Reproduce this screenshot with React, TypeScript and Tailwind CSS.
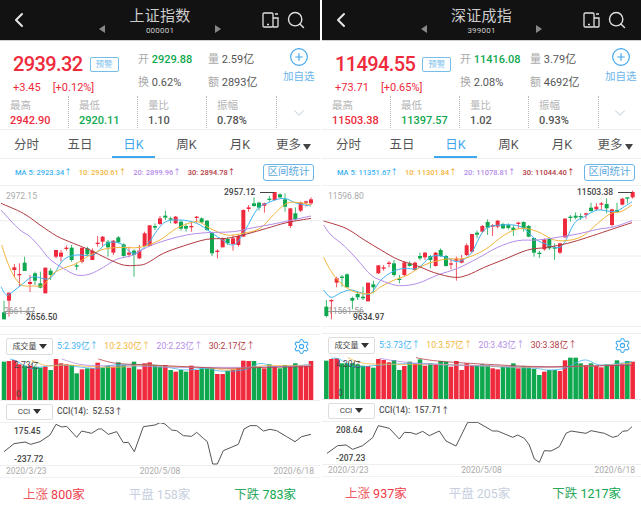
import { ChevronDown, ChevronLeft, CirclePlus, Search, Settings } from 'lucide-react'

const RED = '#ee2a3c'
const GREEN = '#10a84f'
const MA = ['#3fb2f2', '#f2b53a', '#b48ce8', '#b23a42']

type Candle = [number, number, number, number, number, 'r' | 'g']
type Pt = number[]

// smooth a list of points into a path
function smooth(p: Pt[]) {
  let d = `M${p[0][0]} ${p[0][1]}`
  for (let i = 0; i < p.length - 1; i++) {
    const a = p[Math.max(i - 1, 0)]
    const b = p[i]
    const c = p[i + 1]
    const e = p[Math.min(i + 2, p.length - 1)]
    d += `C${b[0] + (c[0] - a[0]) / 6} ${b[1] + (c[1] - a[1]) / 6} ${c[0] - (e[0] - b[0]) / 6} ${c[1] - (e[1] - b[1]) / 6} ${c[0]} ${c[1]}`
  }
  return d
}

const leftCandles: Candle[] = [
  [12,457,478,422,478,'g'],[27,398,422,398,470,'r'],[43,322,330,312,352,'r'],[58,342,346,310,380,'r'],[74,308,333,290,333,'g'],
  [90,366,372,345,396,'r'],[105,340,362,335,375,'g'],[121,370,383,335,385,'g'],[136,323,400,323,400,'r'],[152,332,345,325,360,'g'],
  [168,270,290,270,295,'r'],[183,278,290,270,305,'r'],[199,263,267,256,272,'r'],[215,263,300,255,305,'g'],[230,316,320,308,330,'g'],
  [246,263,305,263,310,'r'],[262,265,283,260,285,'g'],[277,272,300,265,300,'r'],[293,248,252,228,260,'r'],[308,230,245,228,258,'r'],
  [324,245,262,240,290,'g'],[340,242,278,240,285,'r'],[355,232,247,228,250,'g'],[371,253,288,250,290,'g'],[387,278,284,260,292,'r'],
  [402,272,285,268,350,'g'],[418,272,295,255,297,'r'],[434,220,258,215,258,'r'],[449,196,258,196,258,'r'],[465,198,203,190,210,'g'],
  [480,175,192,168,195,'r'],[496,167,173,152,180,'g'],[512,175,177,170,190,'g'],[527,170,190,168,192,'r'],[543,185,206,180,212,'g'],
  [558,198,206,190,215,'g'],[574,198,202,185,215,'r'],[590,170,173,168,188,'r'],[605,175,187,172,190,'g'],[621,182,210,180,212,'g'],
  [636,218,280,218,288,'g'],[652,272,275,268,295,'r'],[668,235,262,232,262,'r'],[683,237,250,232,255,'g'],[699,235,252,225,272,'r'],
  [715,228,255,225,260,'r'],[730,150,230,148,230,'r'],[746,142,147,135,155,'r'],[762,130,138,112,140,'g'],[777,128,143,125,152,'g'],
  [793,130,137,128,158,'r'],[808,116,120,108,125,'g'],[824,96,120,96,122,'r'],[840,103,112,100,115,'g'],[855,118,140,100,155,'g'],
  [871,145,198,145,204,'r'],[886,160,178,142,182,'g'],[902,128,152,125,156,'r'],[918,124,127,122,140,'r'],[933,118,130,112,135,'r'],
]

const rightCandles: Candle[] = [
  [16,440,468,420,472,'g'],[31,420,424,418,478,'r'],[47,355,368,350,382,'r'],[63,350,352,345,380,'g'],[78,343,382,340,382,'g'],
  [94,414,422,410,448,'g'],[110,402,412,395,420,'g'],[126,410,415,380,420,'g'],[141,368,424,368,424,'r'],[157,373,382,362,400,'g'],
  [172,316,340,316,342,'r'],[188,322,326,315,332,'r'],[204,308,312,303,322,'r'],[219,310,345,300,350,'g'],[235,356,360,345,370,'g'],
  [250,307,345,305,348,'r'],[266,310,318,304,320,'g'],[282,308,330,305,332,'r'],[297,288,295,278,300,'g'],[312,278,292,276,300,'r'],
  [328,288,300,285,325,'g'],[344,278,318,276,320,'r'],[359,270,288,265,290,'g'],[375,288,318,285,320,'g'],[390,310,313,295,328,'r'],
  [406,296,302,290,362,'r'],[422,298,308,285,310,'r'],[437,256,285,250,288,'r'],[453,222,275,222,278,'r'],[468,218,224,212,235,'g'],
  [484,198,215,195,218,'r'],[500,186,203,178,225,'g'],[515,196,200,192,228,'r'],[530,182,200,180,205,'r'],[546,192,205,188,208,'g'],
  [562,195,204,190,208,'g'],[577,203,210,195,228,'g'],[592,188,192,185,205,'r'],[608,186,205,184,215,'g'],[623,198,230,195,232,'g'],
  [639,234,278,234,290,'g'],[655,278,280,272,294,'g'],[670,238,268,235,272,'r'],[685,237,265,233,270,'g'],[701,262,266,250,300,'g'],
  [717,250,278,248,282,'r'],[732,176,232,174,234,'r'],[748,170,174,165,185,'g'],[764,167,173,157,178,'g'],[779,168,172,160,180,'g'],
  [795,160,164,158,176,'r'],[810,143,153,128,156,'g'],[826,140,148,130,152,'r'],[841,130,134,126,150,'r'],[857,132,145,115,160,'g'],
  [873,148,195,146,200,'r'],[888,150,156,128,158,'g'],[904,116,134,114,136,'r'],[919,112,114,112,130,'g'],[935,96,112,92,116,'r'],
]

const leftLines: Pt[][] = [
  [[3,380],[20,405],[45,390],[70,370],[100,350],[150,355],[190,300],[230,285],[280,285],[320,250],[360,250],[400,280],[440,255],[490,190],[540,180],[590,190],[630,215],[660,235],[700,255],[730,220],[770,150],[800,130],[850,115],[890,130],[933,138]],
  [[5,255],[20,300],[40,345],[65,375],[100,378],[130,375],[160,340],[190,325],[230,310],[270,285],[310,268],[360,262],[420,262],[480,240],[530,205],[590,185],[630,205],[680,225],[730,220],[780,205],[820,165],[860,130],[900,128],[933,135]],
  [[3,150],[30,180],[60,210],[90,230],[120,262],[150,298],[190,325],[230,345],[270,342],[310,322],[350,298],[400,285],[440,262],[500,240],[560,225],[620,218],[700,215],[760,203],[830,190],[933,168]],
  [[3,130],[70,160],[120,195],[170,228],[220,250],[270,270],[320,295],[370,315],[410,316],[440,310],[490,280],[550,258],[620,238],[680,235],[740,222],[800,205],[860,188],[933,175]],
]

const rightLines: Pt[][] = [
  [[8,390],[30,412],[60,398],[90,390],[125,400],[150,400],[180,360],[215,335],[250,325],[290,325],[330,290],[370,290],[410,305],[450,280],[490,210],[540,195],[600,200],[640,235],[670,250],[720,260],[760,190],[790,170],[830,150],[880,155],[910,140],[933,125]],
  [[8,292],[25,325],[50,360],[80,385],[110,398],[150,400],[180,380],[220,360],[260,345],[310,315],[370,298],[430,295],[490,270],[550,225],[600,205],[650,215],[700,240],[750,240],[790,225],[830,190],[870,160],[900,155],[933,135]],
  [[8,195],[30,225],[70,258],[110,300],[150,345],[190,365],[235,377],[290,370],[350,345],[410,325],[470,295],[530,262],[590,242],[650,240],[710,232],[770,222],[830,208],[880,200],[933,182]],
  [[8,183],[75,205],[130,240],[180,270],[230,298],[290,318],[340,338],[400,352],[440,345],[490,322],[550,298],[620,270],[680,262],[740,250],[800,232],[860,212],[933,188]],
]

const leftVol: [number, string][] = [[12,'g80'],[27,'r78'],[43,'r75'],[58,'r88'],[74,'g92'],[90,'r92'],[105,'g95'],[121,'g98'],[136,'r95'],[152,'g105'],[168,'r72'],[183,'r85'],[199,'r88'],[215,'g90'],[230,'g115'],[246,'r103'],[262,'g100'],[277,'r100'],[293,'r83'],[308,'g98'],[324,'g92'],[340,'r95'],[355,'g82'],[371,'g90'],[387,'r98'],[402,'g80'],[418,'r103'],[434,'r85'],[449,'r82'],[465,'g90'],[480,'g95'],[496,'r90'],[512,'g105'],[527,'r110'],[543,'g105'],[558,'g110'],[574,'r92'],[590,'r105'],[605,'g100'],[621,'g100'],[636,'g100'],[652,'r117'],[668,'r117'],[683,'g107'],[699,'r103'],[715,'r100'],[730,'r77'],[746,'r78'],[762,'g78'],[777,'g95'],[793,'r100'],[808,'g88'],[824,'r95'],[840,'g100'],[855,'g90'],[871,'r95'],[886,'g85'],[902,'r92'],[918,'r92'],[933,'r78']]

const rightVol: [number, string][] = [[16,'g77'],[31,'r72'],[47,'r70'],[63,'g85'],[78,'g85'],[94,'g85'],[110,'g88'],[126,'g92'],[141,'r93'],[157,'g98'],[172,'r72'],[188,'r75'],[204,'r82'],[219,'g75'],[235,'g105'],[250,'r93'],[266,'g80'],[282,'r85'],[297,'g73'],[312,'r92'],[328,'g85'],[344,'r88'],[359,'g78'],[375,'g80'],[390,'r95'],[406,'r78'],[422,'r105'],[437,'r85'],[453,'r90'],[468,'g90'],[484,'g88'],[500,'g90'],[515,'r100'],[530,'r103'],[546,'g95'],[562,'g95'],[577,'g85'],[592,'r100'],[608,'g93'],[623,'g95'],[639,'g102'],[655,'g120'],[670,'r110'],[685,'g105'],[701,'g105'],[717,'r108'],[732,'r76'],[748,'g68'],[764,'g68'],[779,'g85'],[795,'r90'],[810,'g85'],[826,'r93'],[841,'r97'],[857,'g88'],[873,'r90'],[888,'g76'],[904,'r86'],[919,'g78'],[935,'r80']]

const leftVolLines: Pt[][] = [
  [[30,72],[50,78],[90,100],[130,95],[180,90],[230,95],[290,100],[340,90],[400,90],[460,90],[520,100],[560,105],[620,100],[660,108],[730,105],[780,85],[820,95],[880,93],[933,88]],
  [[95,75],[140,92],[200,90],[280,95],[350,97],[430,90],[520,95],[620,98],[680,105],[740,98],[800,92],[870,92],[933,90]],
  [[185,72],[240,88],[300,92],[400,93],[520,97],[620,97],[720,97],[830,95],[933,92]],
  [[295,72],[350,85],[450,90],[560,95],[680,100],[800,97],[933,95]],
]

const rightVolLines: Pt[][] = [
  [[30,70],[55,72],[100,95],[180,90],[290,85],[400,90],[520,95],[640,100],[680,105],[730,100],[790,75],[840,90],[933,80]],
  [[80,68],[130,85],[230,88],[350,88],[500,93],[650,98],[730,95],[830,92],[933,85]],
  [[175,70],[240,80],[330,88],[500,92],[680,97],[830,92],[933,88]],
  [[285,68],[350,78],[500,88],[680,95],[933,90]],
]

const leftCci: Pt[] = [[12,350],[42,326],[75,321],[92,328],[120,320],[150,300],[168,268],[185,276],[200,274],[230,307],[245,288],[275,295],[295,282],[305,282],[325,298],[350,290],[370,323],[385,322],[403,350],[430,275],[465,270],[480,263],[495,267],[515,285],[530,287],[550,302],[575,304],[590,292],[610,310],[622,320],[638,387],[652,387],[670,347],[715,328],[732,282],[750,272],[770,272],[790,288],[810,283],[830,287],[860,305],[885,320],[905,305],[933,298]]
const rightCci: Pt[] = [[18,355],[50,332],[75,330],[95,343],[125,332],[155,308],[172,272],[205,280],[235,312],[250,292],[270,293],[285,298],[305,289],[325,302],[355,288],[375,318],[405,333],[440,262],[470,262],[515,288],[530,288],[575,307],[590,300],[610,310],[625,330],[640,372],[655,382],[670,347],[690,348],[715,335],[735,295],[750,288],[795,295],[810,287],[850,295],[875,307],[890,303],[905,289],[920,287],[933,275]]

function MainChart({ candles, lines, vx, width }: { candles: Candle[]; lines: Pt[][]; vx: number; width: number }) {
  return (
    <svg width={width} height={142} viewBox={`${vx} 75 ${width * 3} 426`} className="block">
      {[76, 182, 288, 395, 500].map((y) => (
        <line key={y} x1={vx} x2={960} y1={y} y2={y} stroke="#eeeeee" strokeWidth={3} />
      ))}
      {candles.map(([x, top, bottom, hi, lo, c]) => (
        <g key={x} fill={c === 'r' ? RED : GREEN}>
          <rect x={x - 1.2} y={hi} width={2.4} height={lo - hi} />
          <rect x={x - 6} y={top} width={12} height={Math.max(bottom - top, 4)} />
        </g>
      ))}
      {lines.map((p, i) => (
        <path key={i} d={smooth(p)} fill="none" stroke={MA[i]} strokeWidth={3} />
      ))}
    </svg>
  )
}

function VolChart({ bars, lines, vx, width, vy }: { bars: [number, string][]; lines: Pt[][]; vx: number; width: number; vy: number }) {
  return (
    <svg width={width} height={42} viewBox={`${vx} ${vy} ${width * 3} 126`} className="block">
      {bars.map(([x, v]) => {
        const top = Number(v.slice(1))
        return <rect key={x} x={x - 6.8} y={top} width={13.6} height={vy + 126 - top} fill={v[0] === 'r' ? RED : GREEN} />
      })}
      {lines.map((p, i) => (
        <path key={i} d={smooth(p)} fill="none" stroke={MA[i]} strokeWidth={2.6} opacity={0.9} />
      ))}
    </svg>
  )
}

function CciChart({ pts, vx, width, vy }: { pts: Pt[]; vx: number; width: number; vy: number }) {
  return (
    <svg width={width} height={42} viewBox={`${vx} ${vy} ${width * 3} 126`} className="block">
      <polyline points={pts.map((p) => p.join(',')).join(' ')} fill="none" stroke="#555555" strokeWidth={3} strokeLinejoin="round" />
    </svg>
  )
}

function Stat({ label, value, color, wide }: { label: string; value: string; color: string; wide?: boolean }) {
  return (
    <div className={`h-[32px] border-r border-dotted border-[#bbbbbb] pl-[10px] ${wide ? 'w-[70px]' : 'w-[69px]'}`}>
      <div className="pt-[3px] text-[10.5px] leading-[14px] text-[#b5b5b5]">{label}</div>
      <div className={`text-[11px] leading-[16px] font-medium whitespace-nowrap ${color}`}>{value}</div>
    </div>
  )
}

type PanelProps = {
  title: string
  code: string
  price: string
  change: string
  pct: string
  open: string
  vol: string
  turn: string
  amt: string
  high: string
  low: string
  ratio: string
  amp: string
  ma: string[]
  upper: string
  lower: string
  peak: string
  peakClass: string
  trough: string
  troughClass: string
  oldClass: string
  candles: Candle[]
  lines: Pt[][]
  volBars: [number, string][]
  volLines: Pt[][]
  volMax: string
  volVals: string[]
  cciVal: string
  cciHi: string
  cciLo: string
  cci: Pt[]
  up: string
  flat: string
  down: string
  vx: number
  width: number
  volVy: number
  cciVy: number
  gapClass: string
  footClass: string
}

function Panel(p: PanelProps) {
  return (
    <div className="shrink-0 bg-white" style={{ width: p.width }}>
      {/* Top bar */}
      <div className="relative flex h-[40px] items-center justify-between bg-[#121212] pl-[7px] pr-[14px] text-[#d8d8d8]">
        <ChevronLeft size={24} strokeWidth={2} className="text-[#e5e5e5]" />
        <div className="absolute left-[99px] right-[99px] top-0 flex items-center justify-between">
          <span className="mt-[21px] h-0 w-0 border-y-[4px] border-r-[6px] border-y-transparent border-r-[#888888]" />
          <div className="flex flex-col items-center">
            <div className="pt-[7px] text-[15px] leading-[18px] tracking-[0.2px] text-[#cccccc]">{p.title}</div>
            <div className="text-[8px] leading-[12px] tracking-[0.2px] text-[#cccccc]">{p.code}</div>
          </div>
          <span className="mt-[21px] h-0 w-0 border-y-[4px] border-l-[6px] border-y-transparent border-l-[#888888]" />
        </div>
        <div className="flex items-center gap-[7px]">
          <svg width="17" height="16" viewBox="0 0 17 16" fill="none" stroke="#e0e0e0" strokeWidth="1.3">
            <rect x="1" y="1" width="10" height="14" rx="1.2" />
            <path d="M11 6h5v8a1 1 0 0 1-1 1h-4M13 2h3" />
            <path d="M5 12.5h2" />
          </svg>
          <Search size={20} strokeWidth={1.7} className="text-[#e0e0e0]" />
        </div>
      </div>

      {/* Quote */}
      <div className="flex h-[56px] border-t border-[#cfcfcf] pt-[12px]">
        <div className="w-[138px] shrink-0 pl-[13px]">
          <div className="flex items-center gap-[7px]">
            <span className="text-[20px] leading-[22px] font-medium tracking-[-0.6px] text-[#ee2a3c]">{p.price}</span>
            <span className="flex h-[15px] w-[29px] items-center justify-center rounded-[2px] border border-[#76bdea] text-[8.5px] text-[#76bdea]">预警</span>
          </div>
          <div className="mt-[6px] flex gap-[12px] text-[11px] leading-[14px] text-[#ee2a3c]">
            <span>{p.change}</span>
            <span>{p.pct}</span>
          </div>
        </div>
        <div className="grid h-[37px] w-[142px] shrink-0 grid-cols-[70px_72px] text-[11px] leading-[14px]">
          <div className="whitespace-nowrap"><span className="text-[#aaaaaa]">开 </span><span className="font-medium text-[#10a84f]">{p.open}</span></div>
          <div className="whitespace-nowrap"><span className="text-[#aaaaaa]">量 </span><span className="text-[#555555]">{p.vol}</span></div>
          <div className="self-end whitespace-nowrap"><span className="text-[#aaaaaa]">换 </span><span className="text-[#555555]">{p.turn}</span></div>
          <div className="self-end whitespace-nowrap"><span className="text-[#aaaaaa]">额 </span><span className="text-[#555555]">{p.amt}</span></div>
        </div>
        <div className="-mt-[6px] ml-[3px] flex flex-col items-center">
          <CirclePlus size={20} strokeWidth={1.4} className="text-[#3fa7ee]" />
          <span className="mt-[3px] text-[10.5px] leading-[14px] whitespace-nowrap text-[#6ab5ea]">加自选</span>
        </div>
      </div>

      {/* Stats */}
      <div className="flex h-[33px]">
        <Stat label="最高" value={p.high} color="text-[#ee2a3c]" />
        <Stat label="最低" value={p.low} color="text-[#10a84f]" />
        <Stat label="量比" value={p.ratio} color="text-[#555555]" />
        <Stat label="振幅" value={p.amp} color="text-[#555555]" wide />
        <div className="flex flex-1 items-center justify-center">
          <ChevronDown size={18} strokeWidth={1.3} className="text-[#b8c8d8]" />
        </div>
      </div>

      {/* Tabs */}
      <div className="flex h-[30px] items-stretch border-y border-[#eeeeee] text-[12.5px] text-[#555555]">
        <div className="flex w-[53px] items-center justify-center pt-[3px]">分时</div>
        <div className="flex w-[54px] items-center justify-center pt-[3px]">五日</div>
        <div className="flex w-[53px] justify-center">
          <div className="flex w-[43px] items-center justify-center border-b-2 border-[#3fa7ee] pt-[4px] text-[#3fa7ee]">日K</div>
        </div>
        <div className="flex w-[53px] items-center justify-center pt-[3px]">周K</div>
        <div className="flex w-[54px] items-center justify-center pt-[3px]">月K</div>
        <div className="flex flex-1 items-center justify-center gap-[2px] pt-[3px]">更多<span className="mt-[2px] h-0 w-0 border-x-[4px] border-t-[6px] border-x-transparent border-t-[#444444]" /></div>
      </div>

      {/* MA row */}
      <div className="flex h-[26px] items-center justify-between pl-[15px] pr-[6px] text-[7.5px] font-medium whitespace-nowrap">
        <div className="flex gap-[7px] pt-[1px]">
          <span className="text-[#3fb2f2]">{p.ma[0]}</span>
          <span className="text-[#f2b53a]">{p.ma[1]}</span>
          <span className="text-[#b48ce8]">{p.ma[2]}</span>
          <span className="text-[#b23a42]">{p.ma[3]}</span>
        </div>
        <span className="flex h-[17px] w-[51px] items-center justify-center rounded-[3px] border border-[#6ab5ea] text-[10.5px] font-normal text-[#5ba8dc]">区间统计</span>
      </div>

      {/* Candles */}
      <div className="relative">
        <MainChart candles={p.candles} lines={p.lines} vx={p.vx} width={p.width} />
        <span className="absolute left-[6px] top-[5px] text-[8.5px] text-[#aaaaaa]">{p.upper}</span>
        <span className={`absolute top-[1px] flex items-center text-[8.5px] font-medium text-[#444444] ${p.peakClass}`}>
          {p.peak}
          <span className="ml-[5px] h-px w-[14px] bg-[#444444]" />
        </span>
        <span className={`absolute bottom-[9px] text-[8.5px] text-[#999999] line-through ${p.oldClass}`}>{p.lower}</span>
        <span className={`absolute bottom-[3px] text-[8.5px] font-medium text-[#444444] ${p.troughClass}`}>{p.trough}</span>
      </div>
      <div className={`border-b border-[#eeeeee] ${p.gapClass}`} />

      {/* Volume */}
      <div className="flex h-[23px] items-center pl-[6px] pr-[4px]">
        <div className="flex h-[17px] w-[47px] items-center justify-center gap-[2px] rounded-[2px] border border-[#dddddd] text-[8px] text-[#444444]">
          成交量<span className="h-0 w-0 border-x-[4px] border-t-[5px] border-x-transparent border-t-[#333333]" />
        </div>
        <div className="ml-[4px] flex gap-[6px] text-[8.7px] whitespace-nowrap">
          <span className="text-[#3fb2f2]">{p.volVals[0]}</span>
          <span className="text-[#f2b53a]">{p.volVals[1]}</span>
          <span className="text-[#b48ce8]">{p.volVals[2]}</span>
          <span className="text-[#b23a42]">{p.volVals[3]}</span>
        </div>
        <Settings size={17} strokeWidth={1.5} className="ml-auto mr-[6px] text-[#3fa7ee]" />
      </div>
      <div className="relative">
        <VolChart bars={p.volBars} lines={p.volLines} vx={p.vx} width={p.width} vy={p.volVy} />
        <span className="absolute left-[14px] top-[1px] text-[8.5px] text-[#444444]">{p.volMax}</span>
        <span className="absolute bottom-[-1px] left-[16px] text-[8.5px] text-[#444444]">0</span>
      </div>

      {/* CCI */}
      <div className="flex h-[22px] items-center border-t border-[#eeeeee] pl-[6px]">
        <div className="flex h-[16px] w-[47px] items-center justify-center gap-[3px] rounded-[2px] border border-[#dddddd] text-[8px] text-[#444444]">
          CCI<span className="h-0 w-0 border-x-[4px] border-t-[5px] border-x-transparent border-t-[#333333]" />
        </div>
        <span className="ml-[4px] text-[8.5px] font-medium text-[#555555]">CCI(14):&nbsp; {p.cciVal}</span>
      </div>
      <div className="relative border-y border-[#eeeeee]">
        <CciChart pts={p.cci} vx={p.vx} width={p.width} vy={p.cciVy} />
        <span className="absolute left-[14px] top-[2px] text-[8.5px] font-medium text-[#444444]">{p.cciHi}</span>
        <span className="absolute bottom-[-1px] left-[14px] text-[8.5px] font-medium text-[#444444]">{p.cciLo}</span>
      </div>

      {/* Dates */}
      <div className="flex h-[11px] items-center justify-between px-[6px] text-[8.5px] text-[#aaaaaa]">
        <span>2020/3/23</span>
        <span>2020/5/08</span>
        <span>2020/6/18</span>
      </div>

      {/* Up / flat / down */}
      <div className={`flex h-[33px] items-center justify-between border-t border-[#f2f2f2] pl-[23px] pt-[3px] text-[12.5px] whitespace-nowrap ${p.footClass}`}>
        <span className="text-[#ee5a60]">上涨 <span className="text-[#ee3a48]">{p.up}</span></span>
        <span className="text-[#c6cfe0]">平盘 <span>{p.flat}</span></span>
        <span className="text-[#2fa85e]">下跌 <span className="text-[#10a84f]">{p.down}</span></span>
      </div>
    </div>
  )
}

export default function App() {
  return (
    <div className="flex h-[509px] w-[641px] gap-[2px] overflow-hidden bg-white font-['Roboto','Noto_Sans_CJK_SC',sans-serif]">
      <Panel
        title="上证指数" code="000001" price="2939.32" change="+3.45" pct="[+0.12%]"
        open="2929.88" vol="2.59亿" turn="0.62%" amt="2893亿"
        high="2942.90" low="2920.11" ratio="1.10" amp="0.78%"
        ma={['MA 5: 2923.34↑', '10: 2930.61↑', '20: 2899.96↑', '30: 2894.78↑']}
        upper="2972.15" lower="2661.47" peak="2957.12" peakClass="left-[224px]"
        trough="2656.50" troughClass="left-[26px]" oldClass="left-[4px]"
        candles={leftCandles} lines={leftLines}
        volBars={leftVol} volLines={leftVolLines} volMax="2.73亿" volVals={['5:2.39亿↑', '10:2.30亿↑', '20:2.23亿↑', '30:2.17亿↑']}
        cciVal="52.53↑" cciHi="175.45" cciLo="-237.72" cci={leftCci}
        up="800家" flat="158家" down="783家"
        vx={0} width={320} volVy={69} cciVy={264} gapClass="h-[8px]" footClass="pr-[24px]"
      />
      <Panel
        title="深证成指" code="399001" price="11494.55" change="+73.71" pct="[+0.65%]"
        open="11416.08" vol="3.79亿" turn="2.08%" amt="4692亿"
        high="11503.38" low="11397.57" ratio="1.02" amp="0.93%"
        ma={['MA 5: 11351.67↑', '10: 11301.84↑', '20: 11078.81↑', '30: 11044.40↑']}
        upper="11596.80" lower="11561.56" peak="11503.38" peakClass="left-[255px]"
        trough="9634.97" troughClass="left-[31px]" oldClass="left-[6px]"
        candles={rightCandles} lines={rightLines}
        volBars={rightVol} volLines={rightVolLines} volMax="4.20亿" volVals={['5:3.73亿↑', '10:3.57亿↑', '20:3.43亿↑', '30:3.38亿↑']}
        cciVal="157.71↑" cciHi="208.64" cciLo="-207.23" cci={rightCci}
        up="937家" flat="205家" down="1217家"
        vx={3} width={319} volVy={66} cciVy={261} gapClass="h-[7px]" footClass="pr-[20px]"
      />
    </div>
  )
}
